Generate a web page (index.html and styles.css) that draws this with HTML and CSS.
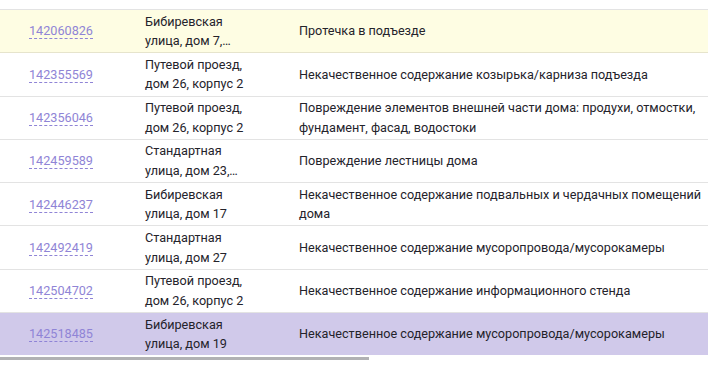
FILE: index.html
```html
<!DOCTYPE html>
<html lang="ru">
<head>
<meta charset="utf-8">
<link rel="stylesheet" href="styles.css">
</head>
<body>
<div class="viewport">
  <table class="grid">
    <tbody>
      <tr class="row row-warn">
        <td class="c-id"><a class="id-link">142060826</a></td>
        <td class="c-addr"><div class="addr">Бибиревская улица, дом 7,…</div></td>
        <td class="c-desc"><div class="desc">Протечка в подъезде</div></td>
      </tr>
      <tr class="row">
        <td class="c-id"><a class="id-link">142355569</a></td>
        <td class="c-addr"><div class="addr">Путевой проезд, дом 26, корпус 2</div></td>
        <td class="c-desc"><div class="desc">Некачественное содержание козырька/карниза подъезда</div></td>
      </tr>
      <tr class="row">
        <td class="c-id"><a class="id-link">142356046</a></td>
        <td class="c-addr"><div class="addr">Путевой проезд, дом 26, корпус 2</div></td>
        <td class="c-desc"><div class="desc">Повреждение элементов внешней части дома: продухи, отмостки, фундамент, фасад, водостоки</div></td>
      </tr>
      <tr class="row">
        <td class="c-id"><a class="id-link">142459589</a></td>
        <td class="c-addr"><div class="addr">Стандартная улица, дом 23,…</div></td>
        <td class="c-desc"><div class="desc">Повреждение лестницы дома</div></td>
      </tr>
      <tr class="row">
        <td class="c-id"><a class="id-link">142446237</a></td>
        <td class="c-addr"><div class="addr">Бибиревская улица, дом 17</div></td>
        <td class="c-desc"><div class="desc">Некачественное содержание подвальных и чердачных помещений дома</div></td>
      </tr>
      <tr class="row">
        <td class="c-id"><a class="id-link">142492419</a></td>
        <td class="c-addr"><div class="addr">Стандартная улица, дом 27</div></td>
        <td class="c-desc"><div class="desc">Некачественное содержание мусоропровода/мусорокамеры</div></td>
      </tr>
      <tr class="row">
        <td class="c-id"><a class="id-link">142504702</a></td>
        <td class="c-addr"><div class="addr">Путевой проезд, дом 26, корпус 2</div></td>
        <td class="c-desc"><div class="desc">Некачественное содержание информационного стенда</div></td>
      </tr>
      <tr class="row row-selected">
        <td class="c-id"><a class="id-link">142518485</a></td>
        <td class="c-addr"><div class="addr">Бибиревская улица, дом 19</div></td>
        <td class="c-desc"><div class="desc">Некачественное содержание мусоропровода/мусорокамеры</div></td>
      </tr>
    </tbody>
  </table>
  <div class="hscroll"><div class="hscroll-thumb"></div></div>
</div>
</body>
</html>
```
FILE: styles.css
```css
html, body {
  margin: 0;
  padding: 0;
  background: #ffffff;
}
body {
  width: 708px;
  height: 381px;
  overflow: hidden;
  font-family: Roboto, "Liberation Sans", sans-serif;
  font-size: 12.65px;
  color: #24232b;
}
.viewport {
  padding-top: 9px;
  width: 708px;
}
.grid {
  width: 708px;
  border-collapse: collapse;
  table-layout: fixed;
  border-top: 1px solid #e3e3e3;
}
.row td {
  border-bottom: 1px solid #e3e3e3;
  vertical-align: middle;
  padding: 1.65px 0;
  line-height: 19.5px;
}
.row-warn td {
  background: #fefde3;
  border-bottom-color: #e6e4cc;
}
.row-selected td {
  background: #d0c9ea;
  border-bottom: none;
}
.c-id {
  width: 116px;
  padding-left: 29px !important;
}
.c-addr {
  width: 154px;
}
.c-desc {
  width: auto;
}
.id-link {
  color: #8f84d6;
  text-decoration: none;
  border-bottom: 1px dashed #8f84d6;
  line-height: 15px;
  display: inline-block;
}
.addr {
  width: 108px;
}
.desc {
  width: 410px;
}
.hscroll {
  height: 5px;
  margin-top: 2px;
}
.hscroll-thumb {
  width: 369px;
  height: 3px;
  background: #b1b1b4;
}
```
